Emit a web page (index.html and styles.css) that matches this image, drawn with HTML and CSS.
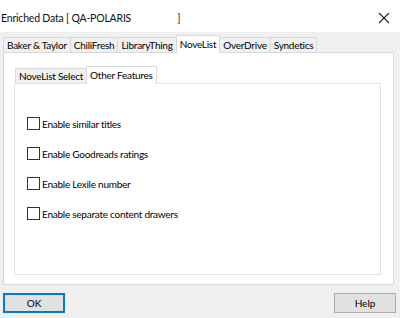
FILE: index.html
```html
<!DOCTYPE html>
<html lang="en">
<head>
    <meta charset="UTF-8">
    <title>Enriched Data [ QA-POLARIS ]</title>
    <link rel="stylesheet" href="styles.css">
</head>
<body>
    <div class="window">
        <div class="titlebar">
            <span class="title">Enriched Data [ QA-POLARIS<span class="gap"></span>]</span>
            <svg class="close" width="12" height="12" viewBox="0 0 12 12">
                <path d="M1 1 L11 11 M11 1 L1 11" stroke="#222" stroke-width="1.1" fill="none"/>
            </svg>
        </div>

        <div class="tabs outer-tabs">
            <div class="tab">Baker &amp; Taylor</div>
            <div class="tab">ChiliFresh</div>
            <div class="tab">LibraryThing</div>
            <div class="tab active">NoveList</div>
            <div class="tab">OverDrive</div>
            <div class="tab">Syndetics</div>
        </div>
        <div class="panel outer-panel">
            <div class="tabs inner-tabs">
                <div class="tab">NoveList Select</div>
                <div class="tab active">Other Features</div>
            </div>
            <div class="panel inner-panel">
                <label class="check"><span class="box"></span>Enable similar titles</label>
                <label class="check"><span class="box"></span>Enable Goodreads ratings</label>
                <label class="check"><span class="box"></span>Enable Lexile number</label>
                <label class="check"><span class="box"></span>Enable separate content drawers</label>
            </div>
        </div>

        <div class="buttons">
            <button class="btn default">OK</button>
            <button class="btn">Help</button>
        </div>
    </div>
</body>
</html>
```

FILE: styles.css
```css
body {
    margin: 0;
    font-family: Lato, "Open Sans", Arial, sans-serif;
    font-size: 10px;
    letter-spacing: -0.25px;
    color: #000;
    background-color: #f0f0f0;
}

.window {
    width: 400px;
    height: 318px;
    overflow: hidden;
}

.titlebar {
    height: 32px;
    background-color: #fff;
    display: flex;
    align-items: center;
    justify-content: space-between;
    padding: 0 10px 0 1px;
    box-sizing: border-box;
}

.title {
    font-size: 10.5px;
    letter-spacing: -0.2px;
    white-space: pre;
    padding-top: 4px;
    color: #111;
}

.gap {
    display: inline-block;
    width: 46px;
}

.close {
    margin-top: 4px;
}

.tabs {
    display: flex;
    align-items: flex-end;
}

.outer-tabs {
    margin: 3px 0 0 3px;
    height: 17px;
}

.tab {
    height: 14px;
    line-height: 14px;
    padding: 0 3px;
    border: 1px solid #d9d9d9;
    border-bottom: none;
    border-right: none;
    background-color: #f0f0f0;
    white-space: nowrap;
}

.tab.active {
    height: 17px;
    line-height: 17px;
    background-color: #fff;
    position: relative;
    z-index: 1;
    margin-bottom: -1px;
    border-right: 1px solid #d9d9d9;
}

.tab.active + .tab {
    border-left: none;
}

.tabs .tab:last-child {
    border-right: 1px solid #d9d9d9;
}

.panel {
    background-color: #fff;
    border: 1px solid #d9d9d9;
    box-sizing: border-box;
}

.outer-panel {
    margin-left: 3px;
    width: 391px;
    height: 233px;
    padding: 13px 0 0 10px;
}

.inner-panel {
    width: 367px;
    height: 192px;
    border-color: #e3e3e3;
    padding-top: 33px;
}

.inner-tabs {
    height: 17px;
    margin-left: 1px;
}

.check {
    display: flex;
    align-items: center;
    height: 13px;
    margin-left: 12px;
    margin-bottom: 17px;
}

.box {
    width: 11px;
    height: 11px;
    border: 1px solid #333;
    background-color: #fff;
    margin-right: 2px;
}

.buttons {
    display: flex;
    justify-content: space-between;
    padding: 8px 4px 0 3px;
}

.btn {
    width: 62px;
    height: 20px;
    font-family: inherit;
    font-size: 10px;
    background-color: #e1e1e1;
    border: 1px solid #adadad;
    padding: 0;
}

.btn.default {
    border: 2px solid #0078d7;
}
```
